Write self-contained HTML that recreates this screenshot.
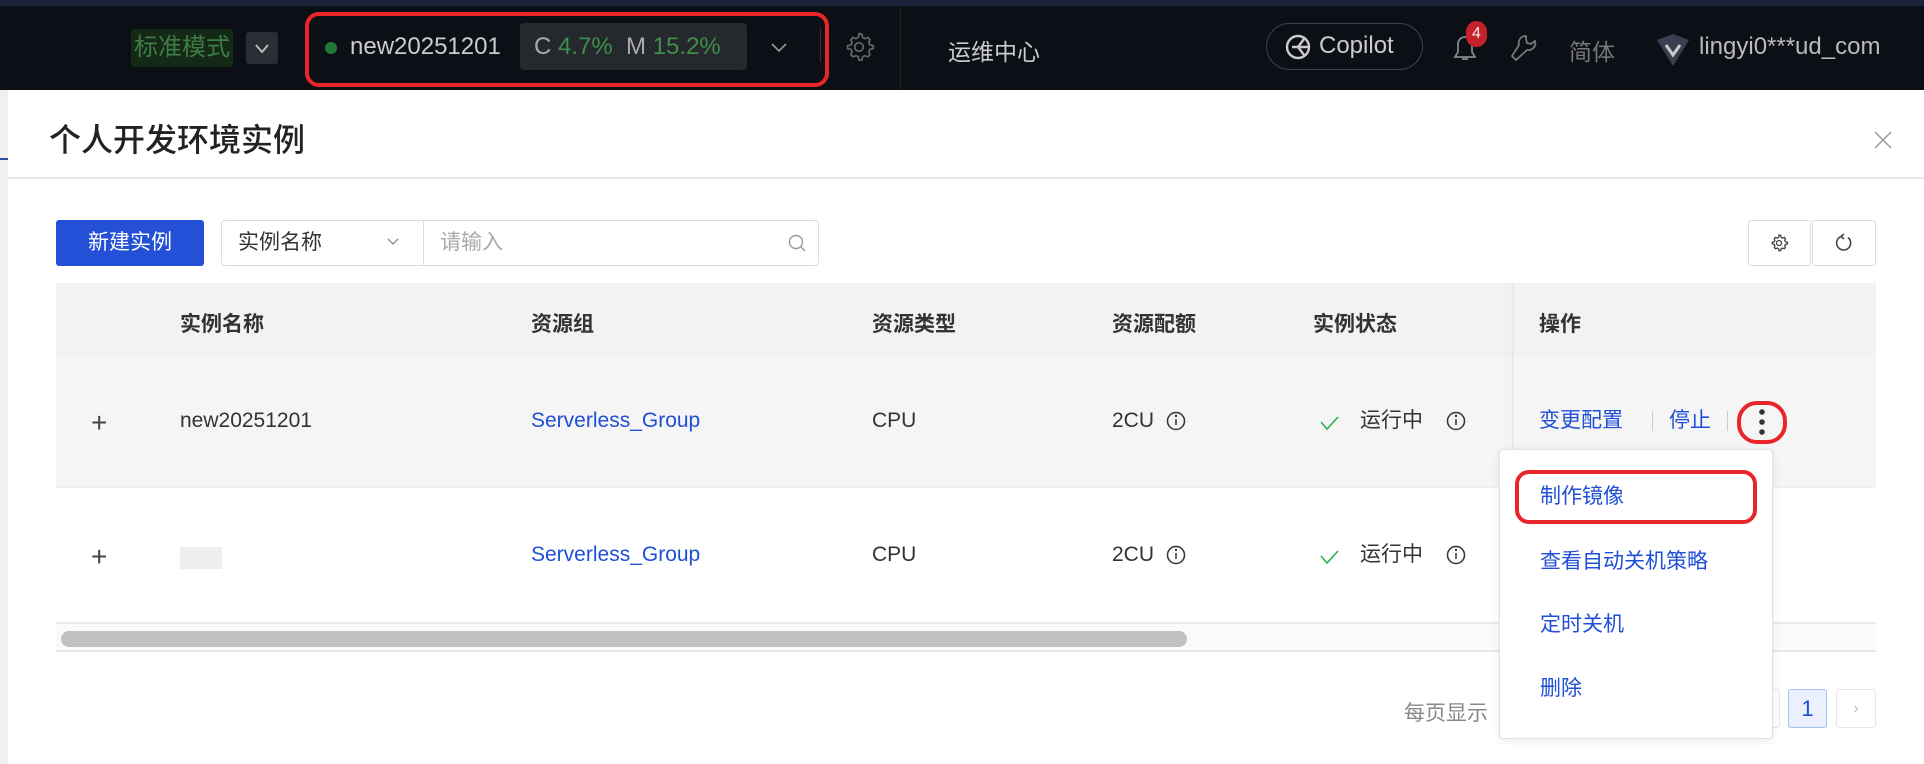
<!DOCTYPE html>
<html><head><meta charset="utf-8"><style>
*{margin:0;padding:0;box-sizing:border-box}
body{width:1924px;height:764px;overflow:hidden;position:relative;background:#fff;font-family:"Liberation Sans","Noto Sans CJK SC",sans-serif;color:#333}
.a{position:absolute;white-space:nowrap}
.t{font-size:21px;line-height:22px}
.blue{color:#1f4fd6}
.hd{font-size:21px;font-weight:bold;color:#333}
</style></head><body>
<!-- top bar -->
<div class="a" style="left:0;top:0;width:1924px;height:90px;background:#0c0f15"></div>
<div class="a" style="left:0;top:0;width:1924px;height:6px;background:#1b2338"></div>
<div class="a" style="left:131px;top:29px;width:102px;height:38px;background:#142a17;border-radius:3px;color:#3f7d44;font-size:24px;line-height:38px;padding-left:3px">标准模式</div>
<div class="a" style="left:246px;top:32px;width:32px;height:32px;background:#2a2d33;border-radius:3px"><svg width="32" height="32"><path d="M10 13l6 7 6-7" stroke="#bbb" stroke-width="2" fill="none"/></svg></div>
<div class="a" style="left:305px;top:12px;width:524px;height:75px;border:4px solid #e8262a;border-radius:14px"></div>
<div class="a" style="left:325px;top:42px;width:12px;height:12px;border-radius:50%;background:#1f7a34"></div>
<div class="a" style="left:350px;top:33px;font-size:24px;color:#ccc">new20251201</div>
<div class="a" style="left:520px;top:23px;width:227px;height:47px;background:#25282d;border-radius:4px;font-size:24px;line-height:47px;padding-left:14px;color:#aaa">C <span style="color:#3f8f4a">4.7%</span>&nbsp; M <span style="color:#3f8f4a">15.2%</span></div>
<svg class="a" style="left:768px;top:38px" width="22" height="20"><path d="M4 6l7 7 7-7" stroke="#999" stroke-width="1.6" fill="none"/></svg>
<div class="a" style="left:820px;top:28px;width:1px;height:34px;background:#333"></div>
<svg class="a" style="left:842px;top:30px" width="34" height="34" viewBox="0 0 24 24"><path d="M12 2.5l2 .4.5 2.3 1.6.9 2.2-.8 1.4 1.5-.8 2.2.9 1.6 2.3.5v2l-2.3.5-.9 1.6.8 2.2-1.4 1.5-2.2-.8-1.6.9-.5 2.3h-2l-.5-2.3-1.6-.9-2.2.8-1.4-1.5.8-2.2-.9-1.6-2.3-.5v-2l2.3-.5.9-1.6-.8-2.2 1.4-1.5 2.2.8 1.6-.9.5-2.3z" stroke="#666" stroke-width="1.2" fill="none"/><circle cx="12" cy="12" r="3" stroke="#666" stroke-width="1.2" fill="none"/></svg>
<div class="a" style="left:900px;top:6px;width:1px;height:84px;background:#222"></div>
<div class="a" style="left:948px;top:33px;font-size:23px;color:#ccc">运维中心</div>
<div class="a" style="left:1266px;top:23px;width:157px;height:47px;border:1.5px solid #3b4358;border-radius:24px;color:#ccc;font-size:24px;line-height:44px;padding-left:52px">Copilot</div>
<svg class="a" style="left:1284px;top:33px" width="28" height="28" viewBox="0 0 28 28"><circle cx="14" cy="14" r="11" stroke="#ccc" stroke-width="2.4" fill="none"/><path d="M8 14h17M14 14l6-8M14 14l6 8" stroke="#ccc" stroke-width="2.4" fill="none"/></svg>
<svg class="a" style="left:1450px;top:32px" width="30" height="32" viewBox="0 0 30 32"><path d="M5 25h20l-3-5v-8a7 7 0 0 0-14 0v8z M12 27h6" stroke="#888" stroke-width="1.8" fill="none"/></svg>
<div class="a" style="left:1466px;top:21px;width:21px;height:26px;border-radius:11px;background:#c4222a;color:#eee;font-size:16px;text-align:center;line-height:26px">4</div>
<svg class="a" style="left:1508px;top:32px" width="30" height="32" viewBox="0 0 30 32"><path d="M18 4a7 7 0 0 0-7 9L4 24l4 4 11-10a7 7 0 0 0 8-9l-4 3-4-1-1-4z" stroke="#777" stroke-width="1.8" fill="none"/></svg>
<div class="a" style="left:1569px;top:33px;font-size:23px;color:#777">简体</div>
<svg class="a" style="left:1655px;top:32px" width="36" height="36" viewBox="0 0 36 36"><path d="M2 8l16-6 16 6-16 26z" fill="#3a3f50"/><path d="M11 13l7 10 7-10" stroke="#ccc" stroke-width="3" fill="none"/></svg>
<div class="a" style="left:1699px;top:33px;font-size:24px;color:#bbb">lingyi0***ud_com</div>
<!-- left sliver -->
<div class="a" style="left:0;top:90px;width:8px;height:674px;background:#f0f0f0"></div>
<div class="a" style="left:0;top:158px;width:8px;height:2px;background:#2d4ba8"></div>
<!-- modal -->
<div class="a" style="left:8px;top:90px;width:1916px;height:674px;background:#fff"></div>
<div class="a" style="left:49px;top:115px;font-size:32px;font-weight:500;color:#222">个人开发环境实例</div>
<svg class="a" style="left:1872px;top:129px" width="22" height="22"><path d="M3 3l16 16M19 3L3 19" stroke="#999" stroke-width="1.5"/></svg>
<div class="a" style="left:8px;top:177px;width:1916px;height:2px;background:#e6e6e6"></div>
<div class="a" style="left:56px;top:220px;width:148px;height:46px;background:#2350d6;border-radius:3px;color:#fff;font-size:21px;line-height:46px;text-align:center">新建实例</div>
<div class="a" style="left:221px;top:220px;width:598px;height:46px;border:1.5px solid #dcdcdc;border-radius:4px"></div>
<div class="a" style="left:423px;top:221px;width:1px;height:44px;background:#dcdcdc"></div>
<div class="a t" style="left:238px;top:232px;color:#333">实例名称</div>
<svg class="a" style="left:385px;top:235px" width="16" height="14"><path d="M3 4l5 5 5-5" stroke="#888" stroke-width="1.3" fill="none"/></svg>
<div class="a t" style="left:440px;top:232px;color:#aaa">请输入</div>
<svg class="a" style="left:786px;top:232px" width="22" height="22"><circle cx="10" cy="10" r="6.5" stroke="#999" stroke-width="1.4" fill="none"/><path d="M15 15l4 4" stroke="#999" stroke-width="1.4"/></svg>
<div class="a" style="left:1748px;top:220px;width:63px;height:46px;border:1.5px solid #dcdcdc;border-radius:3px"></div>
<div class="a" style="left:1812px;top:220px;width:64px;height:46px;border:1.5px solid #dcdcdc;border-radius:3px"></div>
<svg class="a" style="left:1769px;top:233px" width="20" height="20" viewBox="0 0 24 24"><path d="M12 2.5l2 .4.5 2.3 1.6.9 2.2-.8 1.4 1.5-.8 2.2.9 1.6 2.3.5v2l-2.3.5-.9 1.6.8 2.2-1.4 1.5-2.2-.8-1.6.9-.5 2.3h-2l-.5-2.3-1.6-.9-2.2.8-1.4-1.5.8-2.2-.9-1.6-2.3-.5v-2l2.3-.5.9-1.6-.8-2.2 1.4-1.5 2.2.8 1.6-.9.5-2.3z" stroke="#444" stroke-width="1.6" fill="none"/><circle cx="12" cy="12" r="3" stroke="#444" stroke-width="1.6" fill="none"/></svg>
<svg class="a" style="left:1834px;top:233px" width="20" height="20" viewBox="0 0 20 20"><path d="M14 4.5A7 7 0 1 1 7 3.5" stroke="#444" stroke-width="1.6" fill="none"/><path d="M10 1l-3 2.5 3 2.5" stroke="#444" stroke-width="1.6" fill="none"/></svg>
<!-- table -->
<div class="a" style="left:56px;top:283px;width:1820px;height:72px;background:#f2f2f2"></div>
<div class="a" style="left:56px;top:355px;width:1820px;height:132px;background:#f5f5f5"></div>
<div class="a" style="left:56px;top:487px;width:1820px;height:1px;background:#eee"></div>
<div class="a" style="left:1512px;top:283px;width:2px;height:340px;background:#e8e8e8;box-shadow:-4px 0 6px rgba(0,0,0,.06)"></div>
<div class="a hd" style="left:180px;top:308px">实例名称</div>
<div class="a hd" style="left:531px;top:308px">资源组</div>
<div class="a hd" style="left:872px;top:308px">资源类型</div>
<div class="a hd" style="left:1112px;top:308px">资源配额</div>
<div class="a hd" style="left:1313px;top:308px">实例状态</div>
<div class="a hd" style="left:1539px;top:308px">操作</div>
<!-- row1 -->
<div class="a" style="left:91px;top:407px;font-size:28px;color:#444;font-weight:300">+</div>
<div class="a t" style="left:180px;top:410px">new20251201</div>
<div class="a t blue" style="left:531px;top:410px">Serverless_Group</div>
<div class="a t" style="left:872px;top:410px">CPU</div>
<div class="a t" style="left:1112px;top:410px">2CU</div>
<div class="a t" style="left:1360px;top:410px">运行中</div>
<div class="a t blue" style="left:1539px;top:410px">变更配置</div>
<div class="a" style="left:1652px;top:411px;width:1px;height:20px;background:#ccc"></div>
<div class="a t blue" style="left:1669px;top:410px">停止</div>
<div class="a" style="left:1727px;top:411px;width:1px;height:20px;background:#ccc"></div>
<!-- row2 -->
<div class="a" style="left:91px;top:541px;font-size:28px;color:#444;font-weight:300">+</div>
<div class="a" style="left:180px;top:547px;width:42px;height:22px;background:#eee"></div>
<div class="a t blue" style="left:531px;top:544px">Serverless_Group</div>
<div class="a t" style="left:872px;top:544px">CPU</div>
<div class="a t" style="left:1112px;top:544px">2CU</div>
<div class="a t" style="left:1360px;top:544px">运行中</div>
<svg class="a" style="left:0;top:0" width="1924" height="764">
<g stroke="#333" stroke-width="1.5" fill="none">
<circle cx="1176" cy="421" r="8.5"/><path d="M1176 419v6"/><circle cx="1456" cy="421" r="8.5"/><path d="M1456 419v6"/>
<circle cx="1176" cy="555" r="8.5"/><path d="M1176 553v6"/><circle cx="1456" cy="555" r="8.5"/><path d="M1456 553v6"/>
</g>
<g fill="#333"><circle cx="1176" cy="416" r="1.2"/><circle cx="1456" cy="416" r="1.2"/><circle cx="1176" cy="550" r="1.2"/><circle cx="1456" cy="550" r="1.2"/></g>
<g stroke="#2bb24c" stroke-width="1.6" fill="none"><path d="M1321 422l6 7 11-12"/><path d="M1321 556l6 7 11-12"/></g>
<g fill="#333"><circle cx="1762" cy="412" r="2.8"/><circle cx="1762" cy="422" r="2.8"/><circle cx="1762" cy="432" r="2.8"/></g>
<rect x="1739" y="403" width="46" height="39" rx="18" stroke="#e8262a" stroke-width="4" fill="none"/>
</svg>
<!-- scrollbar -->
<div class="a" style="left:56px;top:622px;width:1820px;height:30px;background:#fafafa;border-top:2px solid #e8e8e8;border-bottom:2px solid #e8e8e8"></div>
<div class="a" style="left:61px;top:631px;width:1126px;height:16px;background:#c1c1c1;border-radius:8px"></div>
<!-- pagination -->
<div class="a" style="left:1404px;top:697px;font-size:21px;color:#888">每页显示</div>
<div class="a" style="left:1740px;top:689px;width:40px;height:39px;border:1px solid #e6e6e6;border-radius:3px"></div>
<div class="a" style="left:1788px;top:689px;width:39px;height:39px;border:1.5px solid #a9c0f2;background:#eaf0fd;border-radius:3px;color:#1f4fd6;font-size:22px;text-align:center;line-height:37px">1</div>
<div class="a" style="left:1836px;top:689px;width:40px;height:39px;border:1px solid #e6e6e6;border-radius:3px;color:#bbb;text-align:center;line-height:37px">›</div>
<!-- dropdown -->
<div class="a" style="left:1499px;top:449px;width:274px;height:290px;background:#fff;border:1.5px solid #e2e2e2;border-radius:4px;box-shadow:0 2px 8px rgba(0,0,0,.08)"></div>
<div class="a t blue" style="left:1540px;top:486px">制作镜像</div>
<div class="a" style="left:1515px;top:470px;width:242px;height:54px;border:4px solid #e8262a;border-radius:14px"></div>
<div class="a t blue" style="left:1540px;top:551px">查看自动关机策略</div>
<div class="a t blue" style="left:1540px;top:614px">定时关机</div>
<div class="a t blue" style="left:1540px;top:678px">删除</div>
</body></html>
